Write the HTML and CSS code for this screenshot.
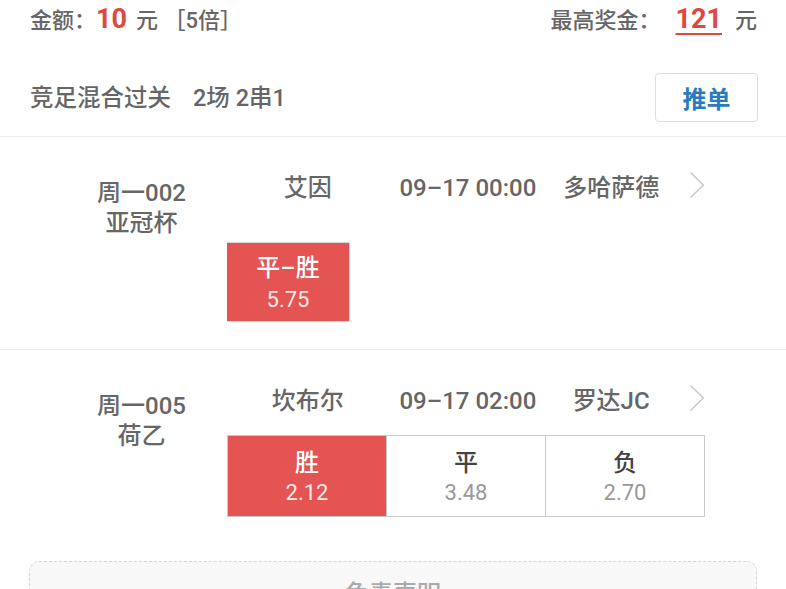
FILE: index.html
```html
<!DOCTYPE html>
<html lang="zh-CN">
<head>
<meta charset="utf-8">
<title>方案详情</title>
<link rel="stylesheet" href="styles.css">
</head>
<body>
<div class="page">
  <header class="summary">
    <div class="amount">金额：<span class="num num-left">10</span>元 ［5倍］</div>
    <div class="prize">最高奖金：<span class="num num-right under">121</span>元</div>
  </header>

  <div class="play">
    <div class="play-info"><span>竞足混合过关</span><span class="play-count">2场 2串1</span></div>
    <button class="push">推单</button>
  </div>

  <section class="match">
    <div class="league">
      <div>周一002</div>
      <div>亚冠杯</div>
    </div>
    <div class="detail">
      <div class="teams">
        <div class="home">艾因</div>
        <div class="time">09–17 00:00</div>
        <div class="away">多哈萨德</div>
        <svg class="chev" width="16" height="28" viewBox="0 0 16 28"><polyline points="1.5,1.5 14.5,14 1.5,26.5" fill="none" stroke="#c6c6c6" stroke-width="1.4"/></svg>
      </div>
      <div class="opts opts-gap">
        <div class="opt opt-single on"><div class="opt-name">平–胜</div><div class="opt-odds">5.75</div></div>
      </div>
    </div>
  </section>

  <section class="match match-last">
    <div class="league">
      <div>周一005</div>
      <div>荷乙</div>
    </div>
    <div class="detail">
      <div class="teams">
        <div class="home">坎布尔</div>
        <div class="time">09–17 02:00</div>
        <div class="away">罗达JC</div>
        <svg class="chev" width="16" height="28" viewBox="0 0 16 28"><polyline points="1.5,1.5 14.5,14 1.5,26.5" fill="none" stroke="#c6c6c6" stroke-width="1.4"/></svg>
      </div>
      <div class="opts opts-row">
        <div class="opt on"><div class="opt-name">胜</div><div class="opt-odds">2.12</div></div>
        <div class="opt"><div class="opt-name">平</div><div class="opt-odds">3.48</div></div>
        <div class="opt"><div class="opt-name">负</div><div class="opt-odds">2.70</div></div>
      </div>
    </div>
  </section>

  <div class="disclaimer">免责声明</div>
</div>
</body>
</html>
```

FILE: styles.css
```css
html, body {
  margin: 0;
  padding: 0;
  background: #fff;
  overflow: hidden;
}
body {
  font-family: Roboto, "Noto Sans CJK SC", "Noto Sans", sans-serif;
  color: #666;
  font-size: 24px;
  font-weight: 500;
}
.summary {
  display: flex;
  justify-content: space-between;
  align-items: center;
  height: 36px;
  padding: 0 29px 0 30px;
  font-size: 22px;
  white-space: pre;
}
.num {
  color: #e0483d;
  font-weight: 700;
  font-size: 27px;
}
.num-left {
  margin-right: 9px;
}
.num-right {
  margin: 0 13px 0 15px;
}
.under {
  text-decoration: underline;
  text-decoration-thickness: 2px;
  text-underline-offset: 5px;
}
.play {
  display: flex;
  justify-content: space-between;
  align-items: center;
  padding: 37px 28px 14px 30px;
  border-bottom: 1px solid #eee;
}
.play-info {
  font-size: 23.5px;
  white-space: pre;
  margin-top: -3px;
}
.play-count {
  margin-left: 22px;
}
.push {
  width: 103px;
  height: 49px;
  border: 1px solid #dedede;
  border-radius: 4px;
  background: #fff;
  color: #2a7bbd;
  font-family: inherit;
  font-size: 24px;
  font-weight: 700;
  padding: 0;
}
.match {
  display: flex;
  padding: 36px 0 27px 0;
  border-bottom: 1px solid #eee;
}
.match-last {
  border-bottom: none;
}
.league {
  width: 171px;
  padding: 5px 0 0 56px;
  text-align: center;
  line-height: 30px;
}
.detail {
  width: 478px;
}
.teams {
  display: flex;
  align-items: center;
  height: 30px;
  line-height: 30px;
}
.home {
  width: 163px;
  text-align: center;
}
.time {
  width: 160px;
  text-align: center;
}
.away {
  width: 123px;
  padding-left: 6px;
  box-sizing: border-box;
  text-align: center;
}
.chev {
  margin-left: 20px;
  margin-top: -6px;
}
.opts {
  display: flex;
}
.opts-gap {
  margin-top: 39px;
}
.opts-row {
  margin-top: 19px;
  border: 1px solid #c9c9c9;
  width: 476px;
}
.opt {
  flex: 1;
  height: 80px;
  display: flex;
  flex-direction: column;
  align-items: center;
  justify-content: center;
  padding-top: 3px;
  box-sizing: border-box;
  border-left: 1px solid #c9c9c9;
  color: #444;
}
.opt:first-child {
  border-left: none;
}
.opt-single {
  flex: none;
  width: 123px;
  border: 1px solid #d9d9d9;
}
.opt-single .opt-odds {
  margin-top: 2px;
}
.opt.on {
  background: #e35453;
  color: #fff;
}
.opt-name {
  font-size: 24px;
  line-height: 30px;
}
.opt-odds {
  font-size: 22px;
  line-height: 30px;
  color: #999;
  font-weight: 400;
}
.opt.on .opt-odds {
  color: #fde9e8;
}
.disclaimer {
  margin: 17px 29px 0 29px;
  height: 80px;
  border: 1px dashed #d6d6d6;
  border-radius: 10px;
  background: #f8f8f8;
  text-align: center;
  color: #aaa;
  line-height: 30px;
  padding-top: 17px;
  box-sizing: border-box;
}
```
